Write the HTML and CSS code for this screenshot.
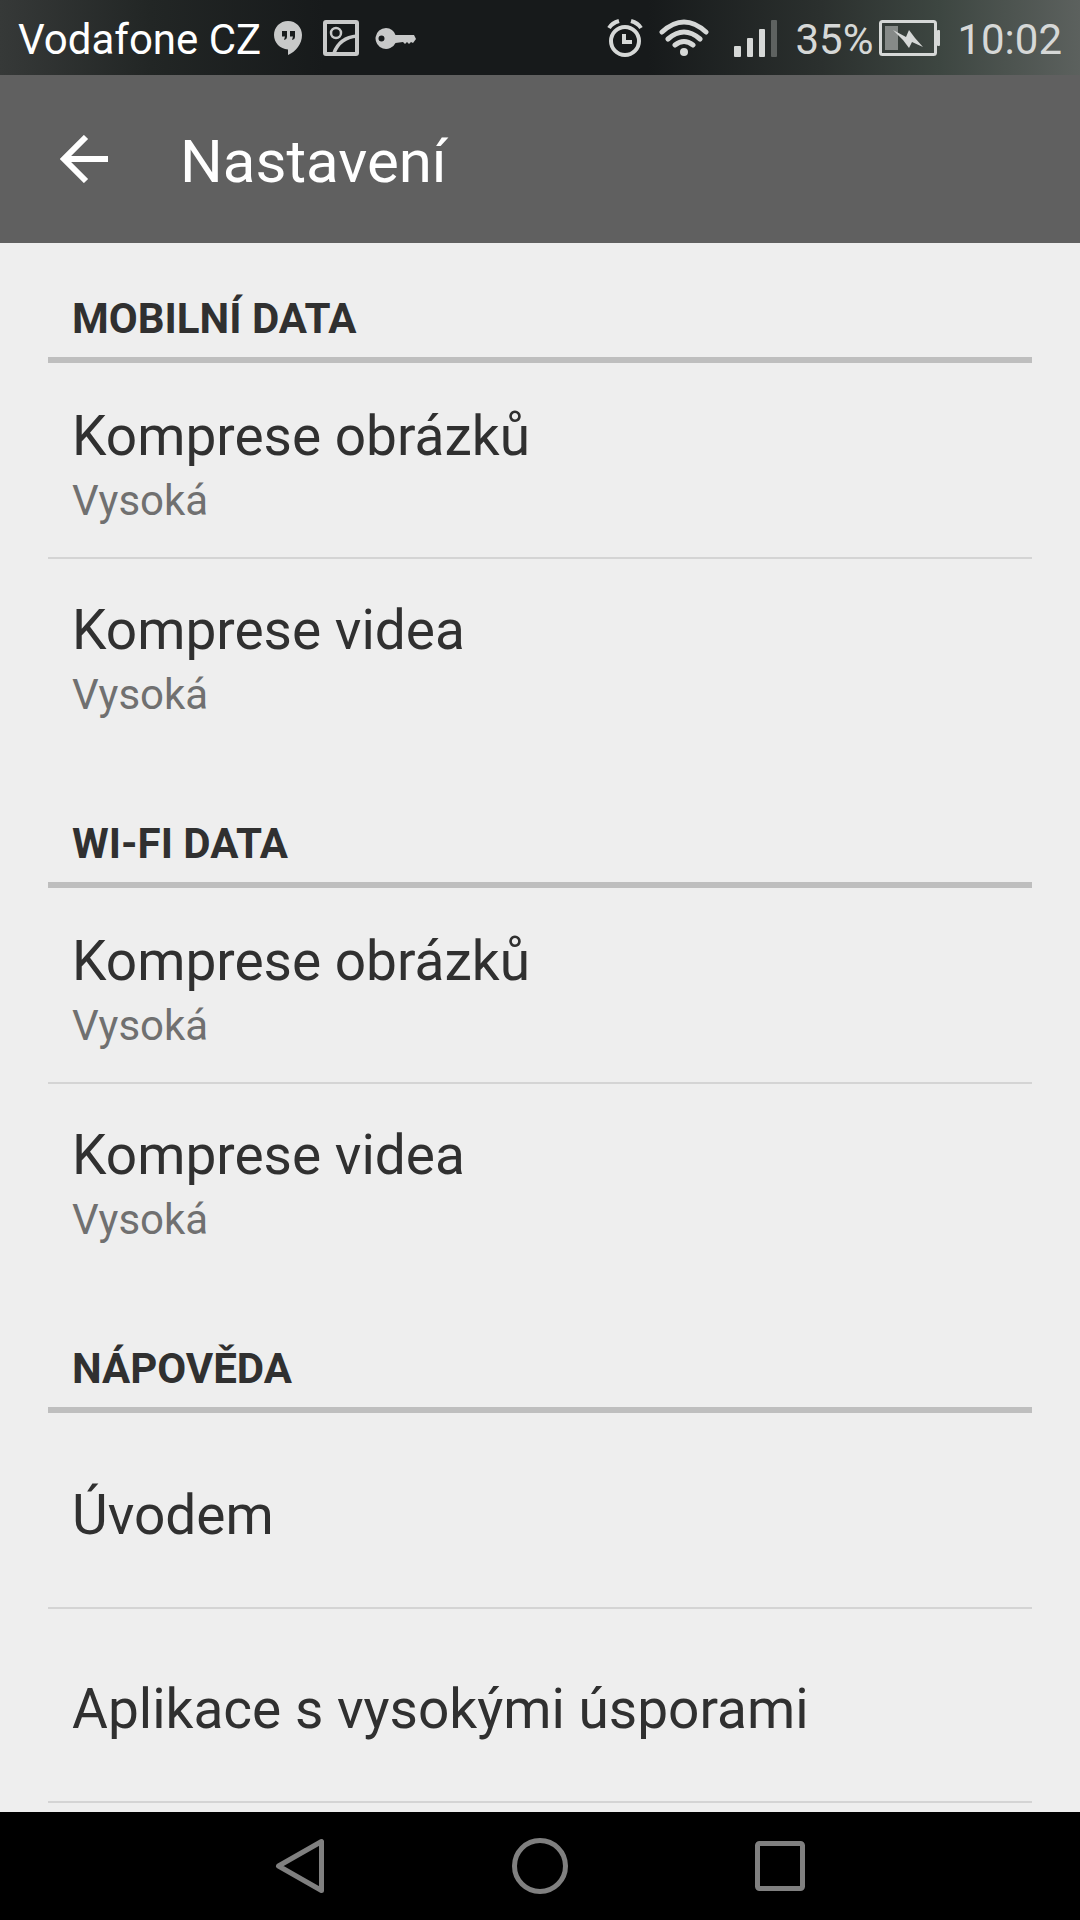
FILE: index.html
```html
<!DOCTYPE html>
<html lang="cs">
<head>
    <meta charset="UTF-8">
    <meta name="viewport" content="width=device-width, initial-scale=1.0">
    <title>Nastavení</title>
    <link rel="stylesheet" href="styles.css">
</head>
<body>
    <div class="status-bar">
        <span class="carrier">Vodafone CZ</span>
        <div class="notifications">
            <svg width="30" height="36" viewBox="0 0 30 36">
                <path fill="#c8c9c9" fill-rule="evenodd" d="M15 1C7 1 1 7.300 1 15s6 14 14 14.500V35c8-3.500 14-11 14-20C29 7.300 23 1 15 1zM9 11h5v5.500c0 2-1 3.200-3 3.500l1-3.500H9zM17 11h5v5.500c0 2-1 3.200-3 3.500l1-3.500h-3z"/>
            </svg>
            <svg width="36" height="36" viewBox="0 0 36 36" fill="none" stroke="#c8c9c9">
                <rect x="2" y="2" width="32" height="32" rx="1" stroke-width="4"/>
                <circle cx="13" cy="13" r="5" stroke-width="2.500"/>
                <path d="M11 33C15 22 23 17 34 16" stroke-width="3.500"/>
            </svg>
            <svg class="key" width="41" height="36" viewBox="0 0 41 36">
                <path fill="#c8c9c9" fill-rule="evenodd" d="M11 8a10.500 10.500 0 1 0 9.500 15L28 22l2 2 2-2 2 2 2-2 2 1 3-4-2-4H20.500A10.500 10.500 0 0 0 11 8zM6.500 15.500a3 3 0 1 1 0 6 3 3 0 0 1 0-6z"/>
            </svg>
        </div>
        <div class="system">
            <svg class="alarm" width="36" height="38" viewBox="0 0 36 38" fill="none" stroke="#d6d8d7">
                <circle cx="18" cy="22" r="14" stroke-width="4"/>
                <path d="M17 15v8h8" stroke-width="4"/>
                <path d="M2 9Q5 4 12 2M34 9Q31 4 24 2" stroke-width="4"/>
            </svg>
            <svg class="wifi" width="50" height="38" viewBox="0 0 50 38" fill="none" stroke="#d6d8d7" stroke-width="5" stroke-linecap="round">
                <path d="M3 13Q25-7 47 13M9 20Q25 6 41 20M16 26Q25 19 34 26"/>
                <circle cx="25" cy="33" r="4" fill="#d6d8d7" stroke="none"/>
            </svg>
            <svg class="signal" width="43" height="38" viewBox="0 0 43 38" fill="#d6d8d7">
                <rect x="0" y="27" width="7" height="11" rx="1"/>
                <rect x="13" y="19" width="6" height="19" rx="1"/>
                <rect x="25" y="10" width="6" height="28" rx="1"/>
                <rect x="37" y="1" width="6" height="37" rx="1" fill="#5e6260"/>
            </svg>
            <span class="percent">35%</span>
            <svg class="battery" width="61" height="36" viewBox="0 0 61 36">
                <rect x="1.500" y="1.500" width="55" height="33" rx="2" fill="none" stroke="#d6d8d7" stroke-width="3"/>
                <rect x="58" y="10" width="3" height="16" rx="1" fill="#d6d8d7"/>
                <rect x="6" y="6" width="13" height="24" fill="#868a88"/>
                <path d="M14 10l13 7 3-7 6 8 8 9-11-5-3 6-6-8z" fill="#d6d8d7"/>
            </svg>
            <span class="clock">10:02</span>
        </div>
    </div>

    <header class="app-bar">
        <button class="back" aria-label="Zpět">
            <svg width="48" height="48" viewBox="0 0 48 48" fill="none" stroke="#fff" stroke-width="6">
                <path d="M26 2L4 24l22 22M4 24h44"/>
            </svg>
        </button>
        <h1>Nastavení</h1>
    </header>

    <main class="settings">
        <section>
            <h2>Mobilní data</h2>
            <ul>
                <li>
                    <a href="#mobile-images">
                        <span class="title">Komprese obrázků</span>
                        <span class="summary">Vysoká</span>
                    </a>
                </li>
                <li>
                    <a href="#mobile-video">
                        <span class="title">Komprese videa</span>
                        <span class="summary">Vysoká</span>
                    </a>
                </li>
            </ul>
        </section>
        <section>
            <h2>Wi-Fi data</h2>
            <ul>
                <li>
                    <a href="#wifi-images">
                        <span class="title">Komprese obrázků</span>
                        <span class="summary">Vysoká</span>
                    </a>
                </li>
                <li>
                    <a href="#wifi-video">
                        <span class="title">Komprese videa</span>
                        <span class="summary">Vysoká</span>
                    </a>
                </li>
            </ul>
        </section>
        <section class="help">
            <h2>Nápověda</h2>
            <ul>
                <li><a href="#intro"><span class="title">Úvodem</span></a></li>
                <li><a href="#savings"><span class="title">Aplikace s vysokými úsporami</span></a></li>
            </ul>
        </section>
    </main>

    <nav class="nav-bar">
        <button aria-label="Zpět">
            <svg width="56" height="58" viewBox="0 0 56 58">
                <path d="M49.500 4.500v49L6.500 29z"/>
            </svg>
        </button>
        <button aria-label="Domů">
            <svg width="56" height="58" viewBox="0 0 56 58">
                <circle cx="28" cy="29" r="25.500"/>
            </svg>
        </button>
        <button aria-label="Poslední aplikace">
            <svg width="56" height="58" viewBox="0 0 56 58">
                <rect x="5.500" y="6.500" width="45" height="45" rx="2"/>
            </svg>
        </button>
    </nav>
</body>
</html>
```
FILE: styles.css
```css
* {
    box-sizing: border-box;
}
body {
    display: flex;
    flex-direction: column;
    height: 100vh;
    margin: 0;
    background-color: #eee;
    color: #303030;
    font-family: Roboto, "Noto Sans", sans-serif;
}
button {
    display: flex;
    align-items: center;
    justify-content: center;
    padding: 0;
    border: none;
    background: none;
    cursor: pointer;
}
svg {
    display: block;
    flex: none;
}

/* status bar */
.status-bar {
    display: flex;
    flex: none;
    align-items: center;
    height: 75px;
    padding: 0 18px;
    background: linear-gradient(90deg, #363938 0%, #222625 14%, #171a1b 30%, #171a1b 60%, #2b302e 76%, #3d4641 87%, #5c615e 100%);
    color: #d6d8d7;
    font-size: 42px;
    line-height: 50px;
    white-space: nowrap;
}
.carrier,
.percent,
.clock {
    padding-top: 4px;
}
.carrier {
    color: #fff;
}
.notifications {
    display: flex;
    gap: 20px;
    margin-left: 12px;
}
.key {
    margin-left: -4px;
}
.system {
    display: flex;
    align-items: center;
    margin-left: auto;
}
.wifi {
    margin-left: 16px;
}
.signal {
    margin: 0 18px 0 25px;
}
.battery {
    margin: 0 17px 0 6px;
}

/* app bar */
.app-bar {
    display: flex;
    flex: none;
    align-items: center;
    height: 168px;
    padding: 0 60px;
    background-color: #606060;
    color: #fff;
}
.back {
    width: 48px;
    height: 72px;
}
h1 {
    margin: 6px 0 0 72px;
    font-size: 60px;
    font-weight: 400;
    line-height: 72px;
}

/* settings list */
.settings {
    flex: 1;
    min-height: 0;
    overflow: hidden;
    padding: 0 48px;
}
section {
    padding-bottom: 17px;
}
h2 {
    margin: 0 0 2px;
    padding: 51px 24px 13px;
    border-bottom: 6px solid #bebebe;
    font-size: 42px;
    font-weight: 700;
    line-height: 50px;
    text-transform: uppercase;
}
ul {
    margin: 0;
    padding: 0;
    list-style: none;
}
li + li,
.help li:last-child {
    border-top: 2px solid #d4d4d4;
}
.help li:last-child {
    border-bottom: 2px solid #d4d4d4;
}
li a {
    display: flex;
    flex-direction: column;
    justify-content: center;
    min-height: 192px;
    padding: 8px 24px 0;
    color: inherit;
    text-decoration: none;
}
.title {
    font-size: 55px;
    line-height: 72px;
}
.summary {
    color: #707070;
    font-size: 42px;
    line-height: 58px;
}

/* navigation bar */
.nav-bar {
    display: flex;
    flex: none;
    justify-content: center;
    height: 108px;
    background-color: #000;
}
.nav-bar button {
    width: 240px;
}
.nav-bar svg {
    fill: none;
    stroke: #808080;
    stroke-width: 5;
    stroke-linejoin: round;
}
```
